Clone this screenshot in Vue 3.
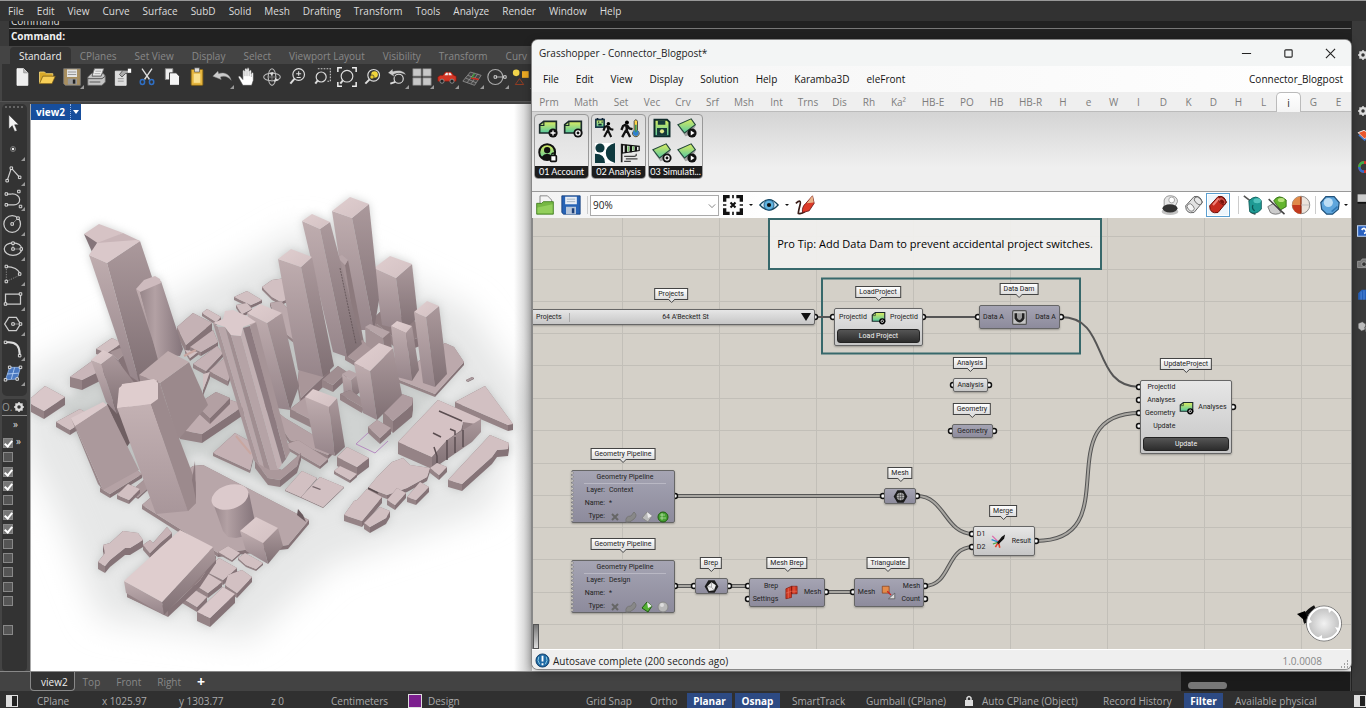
<script setup>
import { ref } from 'vue'

const rhinoMenu = ['File', 'Edit', 'View', 'Curve', 'Surface', 'SubD', 'Solid', 'Mesh', 'Drafting', 'Transform', 'Tools', 'Analyze', 'Render', 'Window', 'Help']
const toolTabs = ['Standard', 'CPlanes', 'Set View', 'Display', 'Select', 'Viewport Layout', 'Visibility', 'Transform', 'Curv']

const lens = (cx, cy, r) => `<circle cx="${cx}" cy="${cy}" r="${r}" fill="none" stroke="#ddd" stroke-width="1.4"/><path d="M${cx - r * 0.7} ${cy + r * 0.7}L4 20" stroke="#ddd" stroke-width="2.4" fill="none"/>`
const toolIcons = [
  { name: 'New', art: '<path d="M6 2h8l5 5v15H6z" fill="#eee" stroke="#fff"/><path d="M14 2v5h5" fill="#bbb" stroke="#888" stroke-width=".8"/>' },
  { name: 'Open', art: '<path d="M3 20V6h6l2 2h8v3" fill="#d9a929" stroke="#f5d777"/><path d="M3 20l4-9h15l-4 9z" fill="#f8cf57" stroke="#6b5010" stroke-width=".8"/>' },
  { name: 'Save', more: 1, art: '<path d="M2 2h20v20H4l-2-2z" fill="#a98f5f" stroke="#777"/><path d="M6 3h12v9H6z" fill="#e4e4e4"/><path d="M7 6h10M7 9h10" stroke="#888"/><path d="M7 14h11v7H7z" fill="#999"/><path d="M13 15h3v5h-3z" fill="#222"/>' },
  { name: 'Print', art: '<path d="M9 2h11l-3 9H6z" fill="#eee" stroke="#777"/><path d="M10 5h7M9 8h7" stroke="#999"/><path d="M1 12l4-4h2l-1 3h11l1-3h2l2 3v7l-4 4H1z" fill="#c4c4c4" stroke="#666"/><path d="M1 14h17l4-3M3 18h13" stroke="#444" fill="none"/>' },
  { name: 'Properties', art: '<path d="M4 5h11l2 3v14H4z" fill="#ddd" stroke="#eee"/><path d="M7 14h7M7 17h7" stroke="#888"/><path d="M9 9l4-5h6l2 3-5 1-4 4z" fill="#aaa" stroke="#333" stroke-width=".8"/><path d="M19 2h4v5h-4z" fill="#fff"/>' },
  { name: 'Cut', art: '<path d="M6 2l9 13M18 2L9 15" stroke="#ddd" stroke-width="1.6"/><ellipse cx="6.500" cy="18" rx="2.600" ry="3" fill="none" stroke="#2f6fc4" stroke-width="1.800"/><ellipse cx="17.500" cy="18" rx="2.600" ry="3" fill="none" stroke="#2f6fc4" stroke-width="1.800"/>' },
  { name: 'Copy', art: '<path d="M4 2h9v13H4z" fill="#eee" stroke="#888"/><path d="M9 7h8l4 4v11H9z" fill="#f5f5f5" stroke="#222"/>' },
  { name: 'Paste', art: '<rect x="5" y="3" width="14" height="19" rx="1" fill="#e5b53e" stroke="#8a6914"/><path d="M8 8h8v11H8z" fill="#f9e08f"/><path d="M9 1h6v5H9z" fill="#ddd" stroke="#555" stroke-width=".8"/>' },
  { name: 'Undo', more: 1, art: '<path d="M1 11l6-6 1 3c6-2 13 0 15 8-4-5-9-6-13-4l1 3z" fill="#ccc" stroke="#888" stroke-width=".6"/>' },
  { name: 'Pan', art: '<path d="M7 22l-5-9c-1-2 1-3 2.500-1L7 15V5c0-2 2.400-2 2.400 0V3c0-2 2.600-2 2.600 0v-.5c0-2 2.600-2 2.600 0V5c0-2 2.600-2 2.600 0v3c0-2 2.400-2 2.400 0v8l-2 6z" fill="#fff" stroke="#444" stroke-width=".7"/><path d="M9.500 5v6M12 4v7M14.600 5v6M17.200 7v5" stroke="#888" stroke-width=".7"/>' },
  { name: 'Rotate view', art: '<ellipse cx="12" cy="12" rx="10" ry="4.500" fill="none" stroke="#bbb" stroke-width="1.300"/><ellipse cx="12" cy="12" rx="4.500" ry="10" fill="none" stroke="#bbb" stroke-width="1.300"/><path d="M12 6v12M6 12h12" stroke="#888"/><path d="M9 7l5-1-2 5zM14 18l2-5 4 3z" fill="#ddd"/>' },
  { name: 'Zoom', art: lens(14, 9, 7) + '<path d="M11 8h6M14 5v5.500M11.500 12.500h5" stroke="#ddd" stroke-width="1.300"/>' },
  { name: 'Zoom window', art: lens(11, 12, 6) + '<path d="M7 2h15v15h-5" fill="none" stroke="#ccc" stroke-width="1.300" stroke-dasharray="2 1.500"/>' },
  { name: 'Zoom extents', art: lens(12, 11, 7) + '<path d="M1 6V1h5M18 1h5v5M23 18v5h-5M1 18v5h5" fill="none" stroke="#eee" stroke-width="1.800"/>' },
  { name: 'Zoom selected', art: lens(14, 10, 7) + '<circle cx="15" cy="9" r="4" fill="#f1d53c"/><circle cx="12" cy="12" r="2.500" fill="#e8c92d" stroke="#333" stroke-width=".8"/>' },
  { name: 'Undo view', more: 1, art: lens(14, 14, 5.5) + '<path d="M1 7l6-5v3c7-2 14-1 16 5-5-3-10-3-15-1l1 3z" fill="#ccc" stroke="#333" stroke-width=".6"/>' },
  { name: 'Four viewports', more: 1, art: '<path d="M1 2h10v9H1zM13 2h10v9H13zM1 13h10v9H1zM13 13h10v9H13z" fill="#c8c8c8" stroke="#777" stroke-width=".8"/>' },
  { name: 'Display car', more: 1, art: '<path d="M1 12l3-2h3l3-4h7l3 4 3 1v6H1z" fill="#d33524" stroke="#7c150c" stroke-width=".7"/><path d="M9 10l2-3h2v3zM14 7h2l2 3h-4z" fill="#eee"/><circle cx="6" cy="17" r="2.500" fill="#222" stroke="#999"/><circle cx="18" cy="17" r="2.500" fill="#222" stroke="#999"/>' },
  { name: 'Construction plane', more: 1, art: '<path d="M1 17L10 6l13 4-8 12zM4 13l13 6M7 10l13 5M6 19l9-12M11 20l8-12" fill="#444" stroke="#999" stroke-width=".9"/><path d="M11 13l9 2" stroke="#c92a1c" stroke-width="2"/><path d="M12 13l3-5" stroke="#3a9d3a" stroke-width="1.500"/>' },
  { name: 'Circle', more: 1, art: '<circle cx="10" cy="12" r="9" fill="none" stroke="#aaa" stroke-width="1.400"/><path d="M10 12h12" stroke="#ccc"/><path d="M8.500 10.500h3v3h-3zM20 10.500h3v3h-3z" fill="#333" stroke="#eee"/>' },
  { name: 'Shapes', more: 1, art: '<circle cx="5" cy="7" r="4" fill="#f2d34a"/><path d="M12 5h8v8h-8z" fill="#e9a723"/><path d="M4 21l5-7 5 7z" fill="none" stroke="#a33f20"/>' },
]

const n = (x, y) => `<path d="M${x - 1.5} ${y - 1.5}h3v3h-3z" fill="#333" stroke="#e8e8e8" stroke-width="1.100"/>`
const sideTools = [
  { name: 'Select', art: '<path d="M7 1v17l4-4 3 7 3-1-3-7h5z" fill="#f3f3f3" stroke="#222" stroke-width=".6"/>' },
  { name: 'Point', art: '<circle cx="12" cy="12" r="3" fill="none" stroke="#888"/><circle cx="12" cy="12" r="1.500" fill="#eee"/>' },
  { name: 'Polyline', art: '<path d="M5 20l5-15 10 11" fill="none" stroke="#ccc" stroke-width="1.500"/>' + n(5, 20) + n(10, 5) + n(20, 16) },
  { name: 'Curve', art: '<path d="M4 6h6c13-1 13 14 2 13H4" fill="none" stroke="#ccc" stroke-width="1.500"/>' + n(4, 6) + n(19, 3) + n(4, 19) + n(21, 21) },
  { name: 'Circle', art: '<circle cx="11" cy="12" r="10" fill="none" stroke="#ccc" stroke-width="1.500"/><path d="M11 12l7-7" stroke="#999"/>' + n(11, 12) + n(18, 5) },
  { name: 'Ellipse', art: '<ellipse cx="12" cy="12" rx="10.500" ry="7.500" fill="none" stroke="#ccc" stroke-width="1.500"/><path d="M12 5v7h10" fill="none" stroke="#999"/>' + n(12, 5) + n(12, 12) + n(22, 12) },
  { name: 'Arc', art: '<path d="M4 3v18l17-8" stroke="#999" stroke-dasharray="1.500 1.500" fill="none"/><path d="M4 3q13 0 17 9" fill="none" stroke="#ccc" stroke-width="1.500"/>' + n(4, 3) + n(4, 21) + n(20, 12) },
  { name: 'Rectangle', art: '<path d="M3 6h18v12H3z" fill="none" stroke="#ccc" stroke-width="1.500"/>' + n(3, 18) + n(21, 6) },
  { name: 'Polygon', art: '<path d="M7 4h9l5 8-5 8H7l-5-8z" fill="none" stroke="#ccc" stroke-width="1.500"/><path d="M12 12h9" stroke="#999"/>' + n(12, 12) + n(21, 12) },
  { name: 'Fillet', art: '<path d="M3 4h4q13 0 13 14v3" fill="none" stroke="#ddd" stroke-width="2.400"/>' + n(3, 4) + n(20, 20) },
  { name: 'Surface', art: '<path d="M8 4l13 0-4 14-14 1z" fill="#4a78c0" stroke="#8fb3e6"/><path d="M5 12l14-1M14 4l-4 14" stroke="#b9d2f5"/>' + n(8, 4) + n(21, 4) + n(3, 19) + n(17, 18) },
]
const layerChecks = ref([true, false, true, true, false, true, true, false, false, false, false, false])
const viewTabs = ['view2', 'Top', 'Front', 'Right']

const statusCells = [
  { t: 'CPlane', w: 65 }, { t: 'x 1025.97', w: 77 }, { t: 'y 1303.77', w: 92 }, { t: 'z 0', w: 60 }, { t: 'Centimeters', w: 77 },
  { t: 'Design', w: 178, swatch: true }, { t: 'Grid Snap', w: 64 }, { t: 'Ortho', w: 37 }, { t: 'Planar', w: 48, on: true }, { t: 'Osnap', w: 48, on: true },
  { t: 'SmartTrack', w: 83, pad: true }, { t: 'Gumball (CPlane)', w: 98 }, { t: 'Auto CPlane (Object)', w: 139, lock: true }, { t: 'Record History', w: 81 }, { t: 'Filter', w: 42, on: true },
]

/* ---------- city model ---------- */
const faces = []
const poly = (fill, points) => faces.push({ fill, points })
const slab = (points, h, top = '#d2c0c2') => {
  const p = points.split(' ').map((s) => s.split(',').map(Number))
  p.forEach((a, i) => {
    const b = p[(i + 1) % p.length]
    const left = (b[1] - a[1]) * (b[0] - a[0]) > 0
    poly(left ? '#958386' : '#857377', `${a} ${b} ${b[0]},${b[1] + h} ${a[0]},${a[1] + h}`)
  })
  poly(top, points)
}
// four roof corners (left, back, right, front) and the three visible feet (left, front, right)
const tower = (roof, feet, top = 'url(#roof)', l = 'url(#sideL)', r = 'url(#sideR)') => {
  const [a, , c, d] = roof.split(' ')
  const [fa, fd, fc] = feet.split(' ')
  poly(l, `${a} ${d} ${fd} ${fa}`)
  poly(r, `${d} ${c} ${fc} ${fd}`)
  poly(top, roof)
}

slab('234,297 247,291 262,300 251,305', 3)
slab('262,287 272,280 286,278 290,298 281,302 272,297', 3)
slab('236,305 247,303 252,309 242,314', 3)
slab('270,303 281,301 296,318 294,340 281,330', 3, '#bba9ac')
slab('177,327 193,313 212,323 186,345', 8, '#c5b2b5')
slab('202,313 207,309 221,317 216,322', 3)
slab('190,347 213,330 218,342 201,352', 4, '#c5b2b5')
slab('193,364 217,346 223,353 206,371', 4, '#c5b2b5')
slab('209,371 224,358 231,372 228,381', 5, '#c0adb0')
slab('203,374 210,372 203,390', 6)
slab('185,350 198,352 190,358', 3)
slab('96,349 112,338 122,343 107,353', 5)
slab('70,377 92,361 108,367 82,380', 10, '#c9b6b9')
slab('31,398 45,386 65,397 44,411 31,404', 8, '#d9c7c9')
slab('56,422 80,409 92,416 70,430', 5)
slab('100,418 110,400 122,413 125,440', 10, '#a08f92')
tower('110,352 120,348 127,352 118,360', '125,395 137,395 140,380', '#a59396', '#94838a', '#857377')

// rear towers
slab('372,320 382,310 425,325 425,335 402,344', 9, '#8f7d80')
tower('374,268 390,256 412,264 396,278', '382,325 403,330 418,318')
tower('332,211 350,197 369,204 352,218', '350,330 374,330 379,300')
tower('337,257 342,255 348,260 345,265', '352,350 358,350 364,343', '#b8a6a9', '#a39194', '#8c7a7d')
slab('345,355 362,340 374,350 362,365', 5, '#a99699')
tower('302,221 312,214 330,222 320,229', '333,352 347,357 362,344')
tower('365,327 370,324 390,332 383,338', '366,345 385,358 392,350', '#b7a5a8', '#a49295', '#8d7b7e')
slab('397,379 420,360 445,343 454,347 464,362 435,394', 3, '#bca9ac')
tower('391,326 397,321 412,326 406,333', '397,377 412,381 419,370')
tower('414,312 427,301 439,306 426,317', '423,383 435,387 447,374')
slab('298,380 300,358 330,368 323,377 301,398', 10, '#a99699')
tower('278,259 291,249 312,257 301,267', '298,370 323,377 334,366')
slab('322,380 338,366 347,372 333,385', 7, '#a08e91')
slab('290,409 308,395 330,405 323,418 312,420', 8, '#b29fa2')
tower('342,374 349,370 358,374 351,380', '344,395 353,398 360,392', '#b8a6a9')
slab('340,394 350,390 364,400 362,407', 6, '#9e8c8f')
tower('247,313 260,304 282,313 267,323', '270,407 290,410 299,386')
slab('262,400 285,418 335,448 328,455 290,440', 4, '#b5a2a5')
slab('284,445 298,440 328,459 320,466', 3, '#b8a5a8')
slab('383,412 402,394 413,398 412,405 393,421', 12, '#af9ca0')
slab('368,427 377,420 391,428 380,438', 6, '#b8a5a8')
tower('354,363 379,343 393,348 370,371', '363,413 377,420 402,395')
tower('305,397 313,389 337,398 329,407', '315,448 335,456 345,447')
slab('337,457 347,447 369,458 357,467', 9)
slab('334,471 340,466 357,474 350,480', 3)

// mid-ground
slab('213,453 235,433 256,445 250,470', 3, '#c5b1b4')
slab('180,430 222,397 245,405 202,434', 9, '#c0adb0')
slab('196,405 216,392 230,398 210,418', 6, '#b3a0a3')
poly('#6f5f62', '107,404 128,394 132,440 126,448')
poly('url(#sideR)', '107,263 140,241 152,277 172,365 158,372 139,382')
poly('url(#sideL)', '89,255 107,263 139,382 130,376')
poly('#85757a', '84,234 98,241 94,251 92,252')
poly('#d6c3c5', '84,234 99,224 123,233 99,244')
poly('#c9b5b8', '123,233 140,241 136,244 97,243')
poly('#dac8ca', '89,255 97,243 136,240 140,241 107,263')
tower('91,360 103,350 113,355 101,364', '106,402 117,414 136,385')
poly('url(#sideL)', '136,289 140,292 162,370 158,357')
poly('url(#tube)', '140,292 161,281 183,349 180,356 166,355 158,360')
poly('#cebbbe', '136,289 144,280 155,276 160,279 161,283 140,292')
tower('139,375 168,351 189,362 160,383', '150,430 178,440 208,405', '#bfacae', '#a08e91', '#9b898c')

slab('100,488 133,467 142,474 110,494', 4, '#b5a2a5')
tower('71,418 103,402 107,405 75,426', '98,484 103,490 139,470', '#dccacc', '#9a888b', '#ab999c')
slab('130,492 146,478 148,488 138,497', 2, '#a99699')
slab('117,495 128,484 140,489 129,500', 4)
slab('142,505 157,492 193,466 203,465 309,520 288,545 218,553', 4, '#b8a6a9')
slab('255,461 282,470 301,453 297,466 280,480 268,478', 7, '#ab989b')
tower('117,408 122,384 157,380 151,404', '156,514 188,511 196,503', 'url(#roof)', 'url(#sideF)', '#9c8a8d')
poly('#9c8a8d', '151,404 157,380 196,483 196,503 188,511')
poly('#dfcdce', '117,408 119,388 124,384 154,379 158,383 158,399 151,404')
poly('#8b797d', '194,467 195,461 196,500 192,480')

// fluted tower
const fluteTop = ['213,323', '218,327', '225,327', '231,335', '241,336', '243,328', '250,326', '256,322']
const fluteFoot = ['254,461', '259,464', '264,467', '270,470', '278,470', '282,464', '286,459', '290,452']
const fluteTone = ['#a79598', '#b9a7aa', '#a08e91', '#b5a3a6', '#c2b0b3', '#8d7b80', '#a69497']
fluteTone.forEach((tone, i) => poly(tone, `${fluteTop[i]} ${fluteTop[i + 1]} ${fluteFoot[i + 1]} ${fluteFoot[i]}`))
poly('#dccacc', '213,323 223,319 225,311 233,310 247,316 256,322 243,327 241,336 231,335 225,327')

slab('285,490 302,471 317,478 301,497', 1)
slab('301,497 320,477 344,487 323,507', 1)
poly('#75656a', '313,486 321,489 320,490 312,487')

// front block and neighbours
slab('98,562 105,553 103,545 110,543 123,531 138,533 143,540 130,548 125,548 110,560 105,566', 7)
slab('143,545 150,540 153,543 167,527 172,533 160,543 150,553', 5, '#c8b4b7')
slab('218,552 228,546 240,553 232,560', 2)
slab('238,558 245,553 263,563 256,569 246,565', 2)
slab('205,571 219,558 237,568 223,580', 5)
slab('192,583 205,572 222,582 208,593', 5)
slab('182,598 191,588 207,597 197,607', 5)
slab('225,585 228,575 242,570 252,577 237,593', 5)
slab('197,612 223,587 235,594 210,618', 9, '#dac8ca')
slab('127,590 162,606 188,580 216,556 200,580 168,610', 7, '#8f7d80')
tower('124,581 180,530 213,547 162,602', '126,593 164,615 216,560', '#dfcdce')
poly('url(#tube)', '212,500 249,493 255,522 250,535 236,538 228,537 223,531')
tower('240,531 256,517 278,528 263,543', '246,551 268,564 283,546')

// right-hand blocks
slab('455,402 485,386 513,424 508,425', 6)
slab('448,480 490,435 509,443 508,449 497,450 492,457 462,484', 7)
slab('398,442 438,400 481,419 476,424 463,422 461,430 447,440 432,457', 12, '#d5c2c4')
poly('url(#sideR)', '432,457 447,440 481,419 481,432 472,442 437,466 432,468')
slab('392,462 403,458 410,465 430,468 427,477 407,488 387,495 368,488 377,477', 4)
slab('430,468 437,463 447,467 439,475', 5)
slab('344,515 354,501 357,500 367,489 382,497 362,521', 6)
slab('364,523 380,507 390,511 386,518 370,527', 6)
slab('387,500 397,488 406,493 395,505', 5)
slab('407,497 420,482 429,487 416,500', 5)
slab('466,380 472,377 474,378 468,381', 1, '#a8969a')

/* ---------- Grasshopper window ---------- */
const ghMenu = ['File', 'Edit', 'View', 'Display', 'Solution', 'Help', 'Karamba3D', 'eleFront']
const ghTabs = [['Prm', 34], ['Math', 40], ['Set', 30], ['Vec', 32], ['Crv', 30], ['Srf', 29], ['Msh', 34], ['Int', 31], ['Trns', 32], ['Dis', 31], ['Rh', 28], ['Ka²', 31], ['HB-E', 38], ['PO', 30], ['HB', 29], ['HB-R', 39], ['H', 26], ['e', 25], ['W', 25], ['I', 25], ['D', 25], ['K', 25], ['D', 25], ['H', 25], ['L', 25], ['i', 25], ['G', 25], ['E', 25]]

const walker = '<circle cx="13" cy="3.500" r="2.500"/><path d="M12 6l-4 2-2 5M12 6l1 8 4 8M12 13l-5 9M13 7l3 4 4 1" fill="none" stroke="#111" stroke-width="3"/>'
const card = '<path d="M2 18V8l5-4h15v14z" fill="url(#leaf)" stroke="#1b2b2b" stroke-width="2"/><path d="M2 9h5V4" fill="none" stroke="#1b2b2b" stroke-width="1.400"/>'
const tile = '<path d="M3 12l7 10 7-2 6-12-6 3z" fill="#8a8a8a" opacity=".7"/><path d="M1 8l16-7 5 7-13 10z" fill="url(#leaf)" stroke="#24483c" stroke-width="1.300"/>'
const gearDot = '<circle cx="18" cy="18" r="5.500" fill="#111"/><circle cx="18" cy="18" r="2.500" fill="#111" stroke="#fff" stroke-width="1.500"/>'
const playDot = '<circle cx="18" cy="18" r="5.500" fill="#111"/><path d="M16.500 15l4.500 3-4.500 3z" fill="#fff"/>'
const plusDot = '<circle cx="18" cy="18" r="5.500" fill="#111"/><path d="M18 15v6M15 18h6" stroke="#fff" stroke-width="1.600"/>'
const panels = [
  { t: '01 Account', icons: [card + plusDot, card + gearDot, '<circle cx="11" cy="11" r="9.500" fill="url(#leaf)" stroke="#111" stroke-width="2.400"/><circle cx="11" cy="8.500" r="3.800" fill="#111"/><path d="M4 17q7-8 14 0l-3 3H7z" fill="#111"/><rect x="15" y="15" width="7" height="7" rx="1" fill="#fff" stroke="#111" stroke-width="2"/><path d="M16 14q2.500-4 5 0" fill="none" stroke="#111" stroke-width="1.600"/>'] },
  { t: '02 Analysis', icons: ['<path d="M1 2h10v9H1z" fill="url(#leaf)" stroke="#1b3a4a" stroke-width="2"/><path d="M3 2V0M9 2V0M4 8h4M4 5h1M8 5h1" stroke="#123" stroke-width="2"/><g transform="translate(5 4) scale(.850)">' + walker + '</g>', '<g transform="translate(-4 2) scale(.950)">' + walker + '</g><path d="M17 4q2-4 4 0v11a4 4 0 1 1-4 0z" fill="#ffd54a" stroke="#333"/><circle cx="19" cy="18" r="3.500" fill="#2f7fd0"/><path d="M18 8h2v9h-2z" fill="#3c9a5c"/>', '<path d="M0 0h24v24H0z" fill="#fff"/><circle cx="6" cy="6" r="5.500" fill="#0f3a3f"/><path d="M0 24V13q12 0 12 11zM24 0v24Q13 21 13 12T24 0z" fill="#0f3a3f"/>', '<path d="M2 1v22" stroke="#222" stroke-width="2"/><path d="M3 2l20 2v5L3 12z" fill="#fff" stroke="#111" stroke-width="1.500"/><path d="M7 2v10M13 3v8M19 4v6" stroke="#111" stroke-width="3"/><path d="M10 4v6M16 4v5" stroke="#7ac06c" stroke-width="2"/><path d="M5 16h12q4-1 2-3M7 19h14M5 22h8" stroke="#444" fill="none" stroke-width="1.500"/>'] },
  { t: '03 Simulati...', icons: ['<path d="M3 2h15l3 3v17H3z" fill="url(#leaf)" stroke="#0e2a2a" stroke-width="2.400"/><path d="M7 3h9v5H7zM6 12h12v9H6z" fill="#173a3a"/><circle cx="12" cy="16" r="2.500" fill="#dfe88a"/>', tile + playDot, tile + gearDot, tile + playDot] },
]

const can = (a, b) => `<path d="M2 13L12 2q8-2 10 7L12 21q-10 2-10-8z" fill="${a}" stroke="${b}" stroke-width="1.200"/><ellipse cx="17" cy="7" rx="5.500" ry="3.500" transform="rotate(45 17 7)" fill="#fff" fill-opacity=".2" stroke="${b}"/>`
const previews = [
  { name: 'No preview', art: '<ellipse cx="12" cy="20" rx="10" ry="4" fill="#999" opacity=".6"/><path d="M5 6q2-6 9-5t7 7l-3 6H5z" fill="#e6e6e6" stroke="#888"/><circle cx="14" cy="6" r="3.500" fill="#fff" stroke="#999"/><ellipse cx="12" cy="16" rx="9" ry="5" fill="#333"/>' },
  { name: 'Wireframe preview', art: can('#e2e2e2', '#666') + '<ellipse cx="8" cy="15" rx="3.500" ry="5" transform="rotate(-40 8 15)" fill="#f6f6f6" stroke="#777"/>' },
  { name: 'Shaded preview', on: true, art: can('#c52a1e', '#6d0d06') + '<path d="M6 12l7-8" stroke="#f0837a" stroke-width="2.500"/><ellipse cx="17" cy="8" rx="3" ry="2" transform="rotate(45 17 8)" fill="#7d120a"/>' },
  { name: 'Document preview', sep: true, art: '<path d="M1 1l9 7v13l5 2" fill="none" stroke="#555" stroke-width="2"/><path d="M7 7q9-9 15 0v10q-7 8-14 3z" fill="#1f9a94" stroke="#0c5754"/><ellipse cx="17" cy="7" rx="4.500" ry="3" fill="#54c4bd"/><path d="M12 12q-2 4 2 7" stroke="#0c5754" fill="none" stroke-width="1.500"/>' },
  { name: 'Selected preview', art: '<path d="M1 14l7-4 9 11q-7 4-13 0z" fill="#ccc" stroke="#666"/><path d="M8 7q6-9 15-1v8l-7 4z" fill="#64b52e" stroke="#2d6410"/><ellipse cx="17" cy="6" rx="4" ry="2.500" fill="#b6e27c"/><path d="M2 5l19 18" stroke="#444" stroke-width="1.800"/>' },
  { name: 'Preview settings', art: '<circle cx="12" cy="12" r="10.500" fill="#ece4dc" stroke="#777"/><path d="M12 1.500a10.500 10.500 0 0 0 0 21z" fill="#e08a4a"/><path d="M12 12v10.500A10.500 10.500 0 0 1 1.500 12z" fill="#c23a1e"/><path d="M12 2v20" stroke="#8a2a10" stroke-width="1.500"/><path d="M12 12h10" stroke="#bbb"/>' },
  { name: 'Preview mesh quality', sep: true, art: '<path d="M7 2h10l6 7-1 8-7 6H8l-6-6-1-8z" fill="#5ea6dd" stroke="#22527a" stroke-width="1.500"/><circle cx="10" cy="9" r="5.500" fill="#d5ecfb" opacity=".8"/><path d="M14 20l7-6" stroke="#2f78b5" stroke-width="2"/>' },
]

const pan = { x: 533, y: 218 }
const box = (x, y, w, h) => ({ left: x - pan.x + 'px', top: y - pan.y + 'px', width: w && w + 'px', height: h && h + 'px' })
const gridX = [622, 719, 816, 913, 1010, 1107, 1204, 1301]
const gridY = [236, 269, 301, 333, 365, 398, 430, 463, 495, 527, 559, 592, 624]
const tags = [['Projects', 671, 288], ['LoadProject', 878, 286], ['Data Dam', 1019, 283], ['Analysis', 970, 357], ['Geometry', 972, 403], ['UpdateProject', 1186, 358], ['Geometry Pipeline', 623, 448], ['Geometry Pipeline', 623, 538], ['Mesh', 900, 467], ['Merge', 1003, 505], ['Brep', 711, 557], ['Mesh Brep', 787, 557], ['Triangulate', 888, 557]]
const wires = ['M1061 317C1110 317 1090 387 1140 387', 'M816 317H833', 'M924 317H978']
const listWires = ['M675 496H883', 'M917 496C945 496 945 534 973 534', 'M924 586C952 586 945 547 973 547', 'M1036 541C1130 541 1045 413 1140 413', 'M675 586H695', 'M729 586H749', 'M826 592H853']
const ports = [[815, 317], [833, 317], [923, 317], [978, 317], [1061, 317], [953, 385], [989, 385], [951, 431], [994, 431], [1139, 387], [1139, 400], [1139, 413], [1139, 426], [1233, 407], [675, 496], [675, 586], [883, 496], [917, 496], [972, 534], [972, 547], [1036, 541], [694, 586], [729, 586], [748, 586], [748, 599], [826, 592], [853, 592], [925, 586], [925, 599]]
const pipelines = [{ y: 470, layer: 'Context', active: 3 }, { y: 560, layer: 'Design', active: 2 }]
const sideIcons = [
  { y: 'g1', art: '<use href="#gear"/>' },
  { y: 'g2', art: '<use href="#gear"/>' },
  { y: 'a', art: '<path d="M2 8l10-4 10 6-9 9z" fill="#e9572b" stroke="#fff" stroke-width="1.500"/><path d="M3 12l10 9 9-8" fill="none" stroke="#3a78d8" stroke-width="2"/>' },
  { y: 'a', art: '<circle cx="12" cy="12" r="8" fill="none" stroke="#d9342b" stroke-width="4.500"/><path d="M4 12a8 8 0 0 0 8 8" stroke="#2f6fd0" stroke-width="4.500" fill="none"/><path d="M12 4a8 8 0 0 0-8 8" stroke="#3bb04a" stroke-width="4.500" fill="none"/>' },
  { y: 'a', art: '<path d="M1 4h22v13H1z" fill="#ccc"/><path d="M1 17h22v3H1z" fill="#111"/>' },
  { y: 'a', art: '<path d="M1 3h22v18H1z" fill="#2a62c0" stroke="#bcd3f5" stroke-width="2"/><path d="M8 10q4-5 7 0t-3 6" fill="none" stroke="#fff" stroke-width="3"/>' },
  { y: 'a', art: '<path d="M1 9h5l3-4h7l3 4h4v11H1z" fill="#777" stroke="#bbb"/><circle cx="12" cy="14" r="4" fill="#333" stroke="#ccc"/>' },
  { y: 'a', art: '<path d="M2 20V9l6-6h12v17z" fill="#245fb8"/><path d="M7 6v14M12 4v16M17 4v16" stroke="#6fa4ee"/>' },
  { y: 'a', art: '<path d="M2 6l7-3 6 4v9l-7 3-6-5zM13 12l6-3 4 3v8h-8z" fill="#bbb" stroke="#444"/>' },
]
</script>

<template>
  <div class="app">
    <svg class="defs" aria-hidden="true">
      <defs>
        <linearGradient id="leaf" x1="0" y1="0" x2="0" y2="1"><stop offset="0" stop-color="#dcec60" /><stop offset="1" stop-color="#55c8a0" /></linearGradient>
        <linearGradient id="roof" x1="0" y1="0" x2="1" y2="1"><stop offset="0" stop-color="#e0cecf" /><stop offset="1" stop-color="#d3c1c3" /></linearGradient>
        <linearGradient id="sideL" x1="0" y1="0" x2="0" y2="1"><stop offset="0" stop-color="#bfadaf" /><stop offset="1" stop-color="#96858a" /></linearGradient>
        <linearGradient id="sideF" x1="0" y1="0" x2="0" y2="1"><stop offset="0" stop-color="#c3b1b3" /><stop offset="1" stop-color="#a8969a" /></linearGradient>
        <linearGradient id="sideR" x1="0" y1="0" x2="0" y2="1"><stop offset="0" stop-color="#ab999c" /><stop offset="1" stop-color="#7f6f73" /></linearGradient>
        <linearGradient id="tube" x1="0" y1="0" x2="1" y2="0"><stop offset="0" stop-color="#97868a" /><stop offset=".35" stop-color="#b3a1a4" /><stop offset="1" stop-color="#84747a" /></linearGradient>
        <radialGradient id="wheel"><stop offset="0" stop-color="#f2f2f2" /><stop offset="1" stop-color="#bdbdbd" /></radialGradient>
        <g id="gear"><circle cx="12" cy="12" r="6" fill="none" stroke="#ddd" stroke-width="4" /><path d="M12 2v20M2 12h20M5 5l14 14M19 5L5 19" stroke="#ddd" stroke-width="3" /><circle cx="12" cy="12" r="3.5" fill="#333" /></g>
        <g id="card"><path d="M2 18V8l5-4h15v14z" fill="url(#leaf)" stroke="#1b2b2b" stroke-width="1.800" /><path d="M2 9h5V4" fill="none" stroke="#1b2b2b" /><circle cx="18" cy="18" r="5" /><circle cx="18" cy="18" r="2" stroke="#fff" stroke-width="1.300" /></g>
      </defs>
    </svg>

    <nav class="menubar"><button v-for="m in rhinoMenu" :key="m">{{ m }}</button></nav>
    <div class="command">
      <div class="history"><span>Command</span></div>
      <label class="prompt"><b>Command:</b><input type="text" aria-label="Command prompt" /></label>
    </div>
    <div class="tooltabs"><button v-for="(t, i) in toolTabs" :key="t" :class="{ on: i === 0 }">{{ t }}</button></div>
    <div class="toolbar">
      <button v-for="t in toolIcons" :key="t.name" :aria-label="t.name" :class="{ more: t.more }"><svg viewBox="0 0 24 24" v-html="t.art" /></button>
    </div>

    <div class="main">
      <aside class="tools">
        <div class="toolbox">
          <div class="grip"></div>
          <button v-for="(t, i) in sideTools" :key="t.name + i" :aria-label="t.name" :class="{ more: i > 0 }"><svg viewBox="0 0 24 24" v-html="t.art" /></button>
        </div>
        <div class="layers">
          <div class="osnap"><span>O.</span><svg viewBox="0 0 24 24"><use href="#gear" /></svg></div>
          <div class="chev">»</div>
          <div class="checkarea">
            <div class="checks"><input v-for="(c, i) in layerChecks" :key="i" v-model="layerChecks[i]" type="checkbox" :aria-label="'Snap ' + (i + 1)" /></div>
            <span class="chev2">»</span>
          </div>
          <input class="lastcheck" type="checkbox" aria-label="Disable" />
        </div>
      </aside>
      <section class="viewport">
        <svg class="scene" viewBox="31 104 501 567" preserveAspectRatio="xMinYMin meet">
          <defs>
            <filter id="haze" x="-20%" y="-20%" width="140%" height="140%"><feGaussianBlur stdDeviation="16" /></filter>
            <filter id="contact" x="-20%" y="-20%" width="140%" height="140%"><feGaussianBlur stdDeviation="4" /></filter>
            <linearGradient id="edge"><stop offset="0" stop-color="#777" stop-opacity="0" /><stop offset="1" stop-color="#777" stop-opacity=".45" /></linearGradient>
          </defs>
          <path filter="url(#haze)" fill="#e6e7e7" d="M20 375L110 330 230 270 300 230 470 310 530 400 490 510 330 565 250 640 100 620 60 520 20 440z" />
          <path filter="url(#contact)" fill="#d0d3d2" d="M60 405L120 355 230 315 400 345 435 395 395 445 330 465 300 500 200 455 110 480 75 430z" />
          <g filter="url(#contact)" fill="#a5a8a7" opacity=".5"><polygon v-for="(f, i) in faces" :key="i" :points="f.points" /></g>
          <path d="M368 433L356 444 375 453 388 441" fill="none" stroke="#b58bc0" />
          <polygon v-for="(f, i) in faces" :key="i" :points="f.points" :fill="f.fill" />
          <ellipse cx="230" cy="497" rx="19" ry="12" transform="rotate(-18 230 497)" fill="#dccacc" />
          <path d="M439 411L462 421M433 433l8 4M450 429l5 2v4M434 447l3 9v7M447 440v20M455 437v16M463 430v17M368 488l10 5" stroke="#5b4e51" stroke-width="1.500" fill="none" />
          <path d="M340 268l16 76" stroke="#5d4f52" stroke-dasharray="2 1" stroke-width=".8" fill="none" />
          <path d="M236 436l10 12 5 6M196 350l-12 6" stroke="#c9a7a1" stroke-width="2" fill="none" />
          <path d="M298 509l5 6 3 7-9-7z" fill="#6a5a5e" />
          <rect x="514" y="104" width="18" height="567" fill="url(#edge)" />
        </svg>
        <button class="viewlabel"><b>view2</b><i></i></button>
      </section>
    </div>

    <div class="viewtabs">
      <button v-for="(t, i) in viewTabs" :key="t" :class="{ on: i === 0 }">{{ t }}</button>
      <button class="add" aria-label="Add viewport">+</button>
      <div class="scroller"><div></div></div>
    </div>
    <footer class="status">
      <span class="dock"></span>
      <span v-for="c in statusCells" :key="c.t" class="cell" :class="{ on: c.on, pad: c.pad }" :style="{ flexBasis: c.w + 'px' }">
        <i v-if="c.swatch" class="swatch"></i>
        <svg v-if="c.lock" viewBox="0 0 10 12"><path d="M1 5h8v6H1z" fill="#ddd" /><path d="M3 5V3q2-3 4 0v2" fill="none" stroke="#ddd" stroke-width="1.500" /></svg>
        {{ c.t }}
      </span>
      <span class="cell last">Available physical</span>
      <span class="dock end"></span>
    </footer>

    <aside class="rightstrip">
      <svg v-for="(s, i) in sideIcons" :key="i" :class="s.y" viewBox="0 0 24 24" v-html="s.art" />
    </aside>

    <section class="gh">
      <header class="title">
        <h1>Grasshopper - Connector_Blogpost*</h1>
        <button aria-label="Minimize"><svg viewBox="0 0 12 12"><path d="M1 6h10" /></svg></button>
        <button aria-label="Maximize"><svg viewBox="0 0 12 12"><rect x="2" y="2" width="8" height="8" rx="1" /></svg></button>
        <button aria-label="Close"><svg viewBox="0 0 12 12"><path d="M1 1l10 10M11 1L1 11" /></svg></button>
      </header>
      <nav class="ghmenu"><button v-for="m in ghMenu" :key="m">{{ m }}</button><span>Connector_Blogpost</span></nav>
      <div class="ghtabs"><button v-for="(t, i) in ghTabs" :key="i" :class="{ on: t[0] === 'i' }" :style="{ flexBasis: t[1] + 'px' }">{{ t[0] }}</button></div>
      <div class="ribbon">
        <div v-for="p in panels" :key="p.t" class="panel">
          <div class="icons"><button v-for="(a, i) in p.icons" :key="i" :aria-label="p.t + ' ' + (i + 1)"><svg viewBox="0 0 24 24" v-html="a" /></button></div>
          <div class="cap">{{ p.t }}</div>
        </div>
      </div>
      <div class="ghbar">
        <button aria-label="Open"><svg viewBox="0 0 24 24"><path d="M6 1h9l5 5v10H6z" fill="#f4f4f4" stroke="#777" /><path d="M2 10h6l2-2h12v15H2z" fill="#76b843" stroke="#3d7a1c" /><path d="M3 15l18-4v11H3z" fill="#93cf5c" /></svg></button>
        <button aria-label="Save"><svg viewBox="0 0 24 24"><path d="M1 1h22v22H3l-2-2z" fill="#2763b5" stroke="#143d7a" /><path d="M5 2h14v9H5z" fill="#e8eef6" /><path d="M7 5h10M7 8h10" stroke="#9ab" /><path d="M6 14h12v9H6z" fill="#b7c6da" /><path d="M13 16h3v6h-3z" fill="#1c3f78" /></svg></button>
        <i class="sep"></i>
        <div class="zoom"><select aria-label="Zoom level"><option>90%</option></select><svg viewBox="0 0 10 10"><path d="M1 3l4 4 4-4" /></svg></div>
        <button aria-label="Zoom extents"><svg viewBox="0 0 24 24"><path d="M2 8V2h6M16 2h6v6M22 16v6h-6M8 22H2v-6M11 2h2M11 22h2M2 11v2M22 11v2" fill="none" stroke="#111" stroke-width="4" /><path d="M9 9l6 6M15 9l-6 6" stroke="#111" stroke-width="2.500" /></svg></button>
        <i class="caret"></i>
        <button aria-label="Named views"><svg viewBox="0 0 24 24"><path d="M1 12q11-13 22 0-11 12-22 0z" fill="#dff0fa" stroke="#16475f" stroke-width="1.500" /><circle cx="12" cy="12" r="6" fill="#5fb4e0" stroke="#114a7a" /><circle cx="12" cy="12" r="2.500" fill="#111" /></svg></button>
        <i class="caret"></i>
        <button aria-label="Sketch"><svg viewBox="0 0 24 24"><path d="M1 10q7-6 5 2T4 22q4 1 8-2" fill="none" stroke="#3a1d18" stroke-width="2" /><path d="M9 21q-1-7 4-11l8-9 2 9-6 9z" fill="#dd3a28" stroke="#611" /><path d="M14 10l7-9 1.500 8z" fill="#e9b48a" /></svg></button>
        <div class="previews">
          <template v-for="p in previews" :key="p.name">
            <i v-if="p.sep" class="sep"></i>
            <button :aria-label="p.name" :class="{ on: p.on }"><svg viewBox="0 0 24 24" v-html="p.art" /></button>
          </template>
          <i class="caret"></i>
        </div>
      </div>

      <div class="canvas">
        <svg class="layer" width="818" height="431" viewBox="533 218 818 431">
          <path v-for="x in gridX" :key="'x' + x" :d="`M${x}.5 218V649`" class="grid" />
          <path v-for="y in gridY" :key="'y' + y" :d="`M533 ${y}.5H1351`" class="grid" />
        </svg>
        <div class="tip" :style="box(768, 218, 334, 52)">Pro Tip: Add Data Dam to prevent accidental project switches.</div>
        <svg class="layer" width="818" height="431" viewBox="533 218 818 431">
          <rect x="822" y="278.500" width="258" height="75" fill="none" stroke="#37686b" stroke-width="2" />
          <path v-for="w in wires" :key="w" :d="w" class="wire" />
          <template v-for="w in listWires" :key="w"><path :d="w" class="wire wide" /><path :d="w" class="wire core" /></template>
          <circle v-for="(p, i) in ports" :key="i" :cx="p[0]" :cy="p[1]" r="2.500" class="port" />
          <path d="M1306 623q-4-9 9-16" fill="none" stroke="#111" stroke-width="4" /><path d="M1297 614l8-3 2 7-3 2z" />
          <circle cx="1324" cy="623.500" r="17.500" fill="url(#wheel)" stroke="#777" /><circle cx="1324" cy="623.500" r="16" fill="none" stroke="#fff" stroke-width="2" />
          <path d="M1328 608l5 1-4 4zM1308 617l4 5-4 2zM1339 628l-4-1 3 5zM1317 638l5-3v5z" fill="#fff" />
        </svg>

        <span v-for="(t, i) in tags" :key="i" class="tag" :style="box(t[1], t[2])">{{ t[0] }}<svg viewBox="0 0 7 4"><path d="M0 0h7L3.500 3.500z" fill="#e2e2e2" /><path d="M0 0l3.500 3.500L7 0" fill="none" stroke="#444" /></svg></span>

        <label class="node list" :style="box(530, 309, 285, 16)"><span>Projects</span><select><option>64 A'Beckett St</option></select><i></i></label>
        <div class="node stack" :style="box(834, 308, 89, 38)">
          <div class="row"><span>ProjectId</span><svg viewBox="0 0 24 24"><use href="#card" /></svg><span>ProjectId</span></div>
          <button>Load Project</button>
        </div>
        <div class="node dark row" :style="box(979, 305, 81, 24)"><span>Data A</span><svg class="dam" viewBox="0 0 24 24"><rect x="1" y="1" width="22" height="22" rx="2" fill="#c4c4c4" stroke="#555" stroke-width="2" /><path d="M6 5v8q6 10 12 0V5" fill="#999" stroke="#222" stroke-width="4" /></svg><span>Data A</span></div>
        <div class="node row" :style="box(953, 378, 35, 14)">Analysis</div>
        <div class="node dark row" :style="box(952, 424, 41, 14)">Geometry</div>
        <div class="node update" :style="box(1140, 380, 92, 74)">
          <div class="cols"><div class="ins"><span>ProjectId</span><span>Analyses</span><span>Geometry</span><span>Update</span></div><svg viewBox="0 0 24 24"><use href="#card" /></svg><span>Analyses</span></div>
          <button>Update</button>
        </div>
        <div v-for="p in pipelines" :key="p.y" class="node dark pipe" :style="box(571, p.y, 104, 53)">
          <svg class="zig" viewBox="0 0 3 52" preserveAspectRatio="none"><path d="M0 0l3 2-3 2 3 2-3 2 3 2-3 2 3 2-3 2 3 2-3 2 3 2-3 2 3 2-3 2 3 2-3 2 3 2-3 2 3 2-3 2 3 2-3 2 3 2-3 2 3 2-3 2z" fill="#d4d0c8" stroke="#777" stroke-width=".5" /></svg>
          <h2>Geometry Pipeline</h2>
          <p><span>Layer:</span>{{ p.layer }}</p>
          <p><span>Name:</span>*</p>
          <p><span>Type:</span>
            <svg viewBox="0 0 12 12"><path d="M3 3l6 6M9 3l-6 6" stroke="#666" stroke-width="2" /></svg>
            <svg viewBox="0 0 12 12"><path d="M1 11q-1-6 5-6l3-4q4 3 0 7t-8 3" fill="#888" stroke="#777" /></svg>
            <svg viewBox="0 0 12 12"><path d="M1 7l5-6 5 4-4 6z" :fill="p.active === 2 ? '#54b135' : '#bbb'" :stroke="p.active === 2 ? '#1f5c10' : '#888'" /><path d="M6 1l5 4-4 2z" fill="#eee" /></svg>
            <svg viewBox="0 0 12 12"><circle cx="6" cy="6" r="5" :fill="p.active === 3 ? '#46a032' : '#b9b9b9'" :stroke="p.active === 3 ? '#1f5c10' : '#888'" /><path v-if="p.active === 3" d="M3 4h5M3 7h6M5 2v7" stroke="#d6f0c8" stroke-width=".6" /><circle v-else cx="5" cy="4" r="2" fill="#ddd" /></svg>
          </p>
        </div>
        <div class="node dark row" :style="box(884, 488, 32, 16)"><svg class="hex" viewBox="0 0 24 24"><path d="M7 2h10l6 10-6 10H7L1 12z" fill="#1c1c1c" /><circle cx="12" cy="12" r="6" fill="#bbb" /><path d="M6 10h12M6 14h12M10 6v12M14 6v12" stroke="#333" /></svg></div>
        <div class="node dark row" :style="box(695, 578, 33, 16)"><svg class="hex" viewBox="0 0 24 24"><path d="M7 2h10l6 10-6 10H7L1 12z" fill="#1c1c1c" /><path d="M12 5l7 5-3 8-8 1-3-7z" fill="#eee" /><path d="M12 5v8l4 5M12 13l-7-1" stroke="#888" fill="none" /></svg></div>
        <div class="node row" :style="box(973, 526, 62, 30)"><div class="col"><span>D1</span><span>D2</span></div><svg class="mid" viewBox="0 0 24 24"><path d="M2 3l10 10" stroke="#d6a" stroke-width="2" /><path d="M1 9l11 4" stroke="#2f8fd0" stroke-width="2.500" /><path d="M3 16l9-3" stroke="#48a848" stroke-width="2" /><path d="M7 21l5-8 2 9" stroke="#e0402a" stroke-width="2.500" fill="none" /><path d="M11 14l7-9 3-2-1 4-8 8z" fill="#111" stroke="#111" stroke-width="2" /></svg><span>Result</span></div>
        <div class="node dark row" :style="box(749, 578, 76, 29)"><div class="col end"><span>Brep</span><span>Settings</span></div><svg class="mid" viewBox="0 0 24 24"><path d="M3 6l9-4v18l-9 2zM12 2h9v12h-9z" fill="#cf3a24" stroke="#7d150a" /><path d="M3 13l9-3h9M16 2v12M7 5v16" stroke="#e8705c" fill="none" /></svg><span>Mesh</span></div>
        <div class="node dark row" :style="box(854, 578, 70, 29)"><span>Mesh</span><svg class="mid" viewBox="0 0 24 24"><path d="M2 2h11v11H2z" fill="#e38b4a" stroke="#7d3410" /><path d="M10 10l6 6" stroke="#c22" stroke-width="2" /><path d="M22 13v9h-10z" fill="#ddd" stroke="#444" /></svg><div class="col end"><span>Mesh</span><span>Count</span></div></div>
        <div class="stub" :style="box(533, 624, 6, 25)"></div>
      </div>

      <footer class="ghstatus">
        <svg viewBox="0 0 16 16"><circle cx="8" cy="8" r="7" fill="#1f6aa5" stroke="#0f3d66" /><path d="M8 3v6M8 11v2" stroke="#fff" stroke-width="2" /><path d="M4 4q-2 4 1 8M12 4q2 4-1 8" stroke="#8fd0e8" fill="none" /></svg>
        <span>Autosave complete (200 seconds ago)</span><span class="ver">1.0.0008</span>
        <svg class="size" viewBox="0 0 9 9"><path d="M7 1h1M7 4h1M7 7h1M4 4h1M4 7h1M1 7h1" stroke="#888" stroke-width="1.500" /></svg>
      </footer>
    </section>
  </div>
</template>

<style>
body { background: #333; overflow: hidden; }
</style>

<style scoped>
* { box-sizing: border-box; }
.app { position: relative; height: 100vh; display: flex; flex-direction: column; overflow: hidden; background: #444; color: #ddd; font: 10px/14px "Open Sans", "Noto Sans", sans-serif; }
.defs { position: absolute; width: 0; height: 0; }
button { appearance: none; border: 0; background: none; padding: 0; margin: 0; color: inherit; font: inherit; white-space: nowrap; }
button svg { display: block; }
.menubar { flex: none; height: 21px; display: flex; align-items: center; gap: 13px; padding-left: 8px; background: #323232; border-top: 1px solid #999; }
.command { flex: none; height: 25px; background: #212121; border-left: 9px solid #3a3a3a; }
.history { height: 8px; overflow: hidden; border-bottom: 1px solid #777; padding-left: 2px; }
.history span { display: block; margin-top: -7px; }
.prompt { display: flex; padding-left: 2px; color: #f2f2f2; }
.prompt input { flex: 1; height: 14px; border: 0; background: none; color: inherit; outline: 0; }
.tooltabs { flex: none; height: 18px; display: flex; align-items: flex-end; padding-left: 10px; color: #888; }
.tooltabs button { padding: 2px 9px 0; height: 17px; line-height: 15px; }
.tooltabs .on { background: #333; color: #eee; border-radius: 4px 4px 0 0; }
.toolbar { flex: none; height: 37px; display: flex; align-items: flex-start; padding: 0 0 0 9px; background: #333; border-left: 2px solid #444; }
.toolbar button { flex: 0 0 25px; height: 25px; position: relative; }
.toolbar svg { width: 20px; height: 20px; margin: 1px 0 0 1px; }
.more::after { content: ""; position: absolute; right: 2px; bottom: 0; border: 2px solid; border-color: transparent #999 #999 transparent; }
.main { flex: 1; min-height: 0; display: flex; padding-top: 2px; border-top: 1px solid #555; }
.tools { flex: 0 0 31px; border-right: 1px solid #aaa; background: #444; padding: 0 3px 0 2px; }
.toolbox { height: 292px; background: #333; border-radius: 5px; padding-top: 2px; }
.grip { height: 3px; width: 18px; margin: 0 0 2px 3px; border-top: 2px dotted #666; }
.toolbox button { display: block; position: relative; width: 25px; height: 25px; }
.toolbox svg { width: 20px; height: 20px; margin-left: 1px; }
.layers { margin-top: 3px; background: #333; border-radius: 4px; height: calc(100% - 295px); }
.osnap { display: flex; align-items: center; gap: 1px; height: 17px; border-bottom: 1px solid #888; color: #999; }
.osnap svg { width: 12px; height: 12px; }
.chev { height: 22px; line-height: 16px; padding-left: 11px; }
.checkarea { display: flex; height: 168px; gap: 3px; }
.checks { display: flex; flex-direction: column; justify-content: space-between; padding-left: 1px; }
input[type="checkbox"] { appearance: none; display: block; width: 10px; height: 10px; margin: 0; background: #555; border: 1px solid #888; }
input[type="checkbox"]:checked { background: #777; }
input[type="checkbox"]:checked::after { content: ""; display: block; width: 3px; height: 6px; margin-left: 2px; border: solid #fff; border-width: 0 2px 2px 0; transform: rotate(40deg); }
.chev2 { line-height: 6px; }
input.lastcheck { margin: 19px 0 0 1px; }
.viewport { flex: 1; position: relative; background: #fff; overflow: hidden; }
.scene { display: block; width: auto; height: 100%; }
.viewlabel { position: absolute; left: 0; top: 0; height: 16px; display: flex; align-items: center; background: #174e9c; color: #fff; padding: 0 2px 0 5px; gap: 5px; }
.viewlabel i { height: 16px; width: 9px; border-left: 1px dotted #8fb2e6; position: relative; }
.viewlabel i::after { content: ""; position: absolute; left: 2px; top: 6px; border: 3px solid transparent; border-top: 4px solid #fff; }
.viewtabs { flex: none; height: 20px; display: flex; align-items: center; padding-left: 30px; padding-right: 16px; background: #434343; border-top: 1px solid #888; color: #888; }
.viewtabs button { height: 19px; margin-right: 16px; padding-top: 1px; }
.viewtabs .on { background: #333; border: 1px solid #888; border-top: 0; border-radius: 0 0 4px 4px; color: #eee; padding: 1px 6px 0 10px; margin-right: 8px; }
.viewtabs .add { color: #fff; font-weight: 700; font-size: 14px; }
.scroller { margin-left: auto; width: 169px; height: 20px; background: #1b1b1b; padding: 10px 7px; }
.scroller div { width: 39px; height: 7px; border-radius: 4px; background: #777; }
.status { flex: none; height: 17px; display: flex; align-items: center; background: #303030; color: #aaa; padding: 2px 0 0 6px; white-space: nowrap; overflow: hidden; }
.dock { flex: none; width: 12px; height: 12px; background: linear-gradient(90deg, #ddd 5px, #222 5px); border: 1px solid #ddd; margin-right: 19px; }
.dock.end { margin: 0 0 0 auto; }
.cell { flex-grow: 0; flex-shrink: 0; display: flex; align-items: center; gap: 6px; height: 16px; }
.cell.on { background: #2d4a83; color: #fff; font-weight: 700; justify-content: center; border-right: 3px solid #303030; }
.cell.pad { padding-left: 9px; }
.cell.last { padding-left: 9px; }
.swatch { width: 14px; height: 14px; background: #7c1f8e; border: 1px solid #ddd; }
.cell svg { width: 10px; height: 12px; margin-right: 2px; }
.rightstrip { position: absolute; right: 0; top: 21px; width: 15px; bottom: 17px; background: #3a3a3a; border-left: 1px solid #222; overflow: hidden; padding: 27px 0 0 5px; }
.rightstrip svg { display: block; width: 14px; height: 14px; margin-bottom: 18px; }
.rightstrip .g1 { margin-bottom: 42px; width: 12px; }
.rightstrip .g2 { margin-bottom: 10px; width: 12px; }

.gh { position: absolute; left: 532px; right: 15px; top: 40px; bottom: 39px; display: flex; flex-direction: column; background: #efefef; border-radius: 6px; overflow: hidden; color: #222; box-shadow: 0 0 0 1px #888, 0 2px 8px #0006; }
.title { flex: none; height: 26px; display: flex; align-items: center; background: #f3f5f5; padding-left: 7px; }
.title h1 { margin: 0 auto 0 0; font-size: 10px; font-weight: 400; }
.title button { width: 42px; height: 26px; display: grid; place-items: center; }
.title svg { width: 11px; height: 11px; fill: none; stroke: #222; stroke-width: 1.200; }
.ghmenu { flex: none; height: 26px; display: flex; align-items: center; gap: 17px; padding: 0 8px 0 11px; background: linear-gradient(90deg, #f4f4f4, #fff); color: #111; }
.ghmenu span { margin-left: auto; }
.ghtabs { flex: none; height: 20px; display: flex; background: #efefef; color: #7d7d7d; border-bottom: 1px solid #bbb; }
.ghtabs button { flex-grow: 0; flex-shrink: 0; height: 20px; text-align: center; }
.ghtabs .on { background: linear-gradient(#fff, #f4f4f4); border: 1px solid #bbb; border-bottom: 0; border-radius: 5px 5px 0 0; color: #222; }
.ribbon { flex: none; height: 80px; display: flex; gap: 2px; padding: 2px; background: linear-gradient(#d4d4d4, #efefef 70%); border-bottom: 1px solid #999; }
.panel { width: 55px; height: 65px; border: 1px solid #999; border-radius: 4px; background: linear-gradient(#ddd, #eee); overflow: hidden; }
.icons { height: 52px; display: flex; flex-wrap: wrap; padding: 0 3px 0 0; align-content: flex-start; }
.icons button { width: 25px; height: 25px; display: grid; place-items: center; }
.icons svg { width: 20px; height: 20px; }
.cap { height: 13px; line-height: 11px; margin: -1px; background: #1d1d1d; color: #fff; text-align: center; font-size: 9px; font-family: Lato, "Open Sans", sans-serif; white-space: nowrap; }
.ghbar { flex: none; height: 26px; display: flex; align-items: center; padding-left: 3px; background: linear-gradient(90deg, #f2f2f2, #fff 30%); gap: 6px; }
.ghbar button { width: 20px; height: 20px; display: grid; place-items: center; }
.ghbar button svg { width: 20px; height: 20px; }
.sep { width: 1px; height: 18px; background: #ccc; }
.zoom { position: relative; width: 129px; margin: 0 -2px 0 -4px; }
.zoom select { appearance: none; width: 100%; height: 21px; border: 1px solid #aaa; background: #fff; font: inherit; color: #222; padding: 0 2px; display: block; }
.zoom svg { position: absolute; right: 3px; top: 7px; width: 8px; height: 8px; fill: none; stroke: #666; }
.caret { width: 4px; height: 0; border: 2px solid transparent; border-top: 2px solid #111; margin-top: 2px; }
.previews { margin-left: auto; display: flex; align-items: center; gap: 4px; padding-right: 3px; }
.previews .on { outline: 1px solid #5a9fd0; outline-offset: 1px; background: #eef6fc; }
.previews .on + .sep { margin-left: 6px; }

.canvas { flex: 1; min-height: 0; position: relative; overflow: hidden; background: #d4d0c8; border-left: 1px solid #888; font: 7px/9px Roboto, "Open Sans", sans-serif; color: #222; }
.layer { position: absolute; left: 0; top: 0; }
.grid { stroke: #c2bfb8; }
.wire { fill: none; stroke: #555; stroke-width: 2; }
.wide { stroke-width: 4; }
.core { stroke: #a9a7a2; stroke-width: 2; }
.port { fill: #fff; stroke: #111; stroke-width: 1.500; }
.tip { position: absolute; display: grid; place-items: center; background: #f1f0eeee; border: 2px solid #37686b; color: #000; font: 500 11px/16px "Open Sans", sans-serif; white-space: nowrap; }
.tag { position: absolute; transform: translateX(-50%); white-space: nowrap; padding: 1px 3px; height: 12px; background: linear-gradient(#fff, #ddd); border: 1px solid #444; }
.tag svg { position: absolute; left: calc(50% - 3px); top: 10px; width: 7px; height: 4px; }
.node { position: absolute; border: 1px solid #666; border-radius: 2px; background: linear-gradient(#e6e6e6, #c6c6c6); white-space: nowrap; box-shadow: 0 1px 2px #0004; }
.node.dark { background: linear-gradient(#a5a4b3, #8d8b9c); }
.row { display: flex; align-items: center; justify-content: space-around; }
.node svg { width: 15px; height: 15px; flex: none; }
.node button { display: block; height: 14px; line-height: 12px; border: 1px solid #222; border-radius: 3px; background: linear-gradient(#555, #2c2c2c); color: #f2f2f2; }
.stack { padding: 1px 2px 2px; display: flex; flex-direction: column; justify-content: space-between; }
.stack button { width: 100%; }
.list { display: flex; align-items: center; padding: 0 3px 0 5px; }
.list span { width: 34px; border-right: 1px solid #aaa; }
.list select { appearance: none; flex: 1; border: 0; background: none; font: inherit; color: inherit; text-align: center; text-align-last: center; height: 13px; padding: 0; }
.list i { border: 5px solid transparent; border-top: 8px solid #111; border-bottom: 0; }
.dam { margin: 0 2px; }
.update { padding: 0 2px 2px; display: flex; flex-direction: column; justify-content: space-between; }
.cols { display: flex; align-items: center; gap: 4px; padding-left: 2px; }
.ins { display: flex; flex-direction: column; text-align: right; line-height: 13px; }
.pipe { padding: 0 0 0 9px; }
.pipe h2 { margin: 0 8px 0 3px; font: inherit; line-height: 13px; height: 13px; text-align: center; border-bottom: 1px solid #b9b8c4; }
.pipe p { margin: 0; height: 13px; line-height: 13px; display: flex; align-items: center; gap: 4px; }
.pipe p span { width: 24px; text-align: right; }
.pipe p svg { width: 12px; height: 12px; }
.node .zig { position: absolute; left: -1px; top: 0; width: 3px; height: 51px; }
.node .hex { width: 15px; height: 15px; }
.col { display: flex; flex-direction: column; line-height: 13px; }
.col.end { text-align: right; }
.stub { position: absolute; border: 1px solid #555; background: linear-gradient(#777, #ddd); }
.ghstatus { flex: none; height: 20px; display: flex; align-items: center; gap: 3px; padding: 2px 2px 0 3px; background: #efefef; border-top: 1px solid #fff; }
.ghstatus svg { width: 15px; height: 15px; }
.ghstatus .size { width: 9px; height: 9px; align-self: flex-end; margin-left: 15px; }
.ver { margin-left: auto; color: #888; }
</style>
